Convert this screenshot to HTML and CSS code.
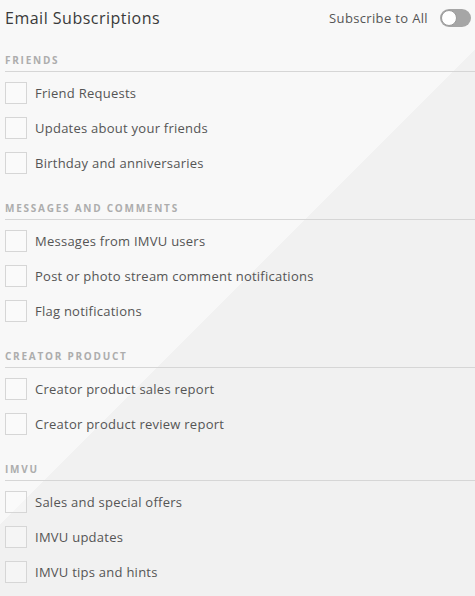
FILE: index.html
```html
<!DOCTYPE html>
<html lang="en">
<head>
<meta charset="utf-8">
<title>Email Subscriptions</title>
<link rel="stylesheet" href="styles.css">
</head>
<body>
<div class="page">
  <header class="topbar">
    <h1 class="title">Email Subscriptions</h1>
    <label class="sub-all">
      <span class="sub-all-text">Subscribe to All</span>
      <span class="toggle"><span class="knob"></span></span>
    </label>
  </header>

  <section class="group">
    <h2 class="group-title">Friends</h2>
    <ul class="options">
      <li class="option"><span class="box"></span><span class="label">Friend Requests</span></li>
      <li class="option"><span class="box"></span><span class="label">Updates about your friends</span></li>
      <li class="option"><span class="box"></span><span class="label">Birthday and anniversaries</span></li>
    </ul>
  </section>

  <section class="group">
    <h2 class="group-title">Messages and Comments</h2>
    <ul class="options">
      <li class="option"><span class="box"></span><span class="label">Messages from IMVU users</span></li>
      <li class="option"><span class="box"></span><span class="label">Post or photo stream comment notifications</span></li>
      <li class="option"><span class="box"></span><span class="label">Flag notifications</span></li>
    </ul>
  </section>

  <section class="group">
    <h2 class="group-title">Creator Product</h2>
    <ul class="options">
      <li class="option"><span class="box"></span><span class="label">Creator product sales report</span></li>
      <li class="option"><span class="box"></span><span class="label">Creator product review report</span></li>
    </ul>
  </section>

  <section class="group">
    <h2 class="group-title">IMVU</h2>
    <ul class="options">
      <li class="option"><span class="box"></span><span class="label">Sales and special offers</span></li>
      <li class="option"><span class="box"></span><span class="label">IMVU updates</span></li>
      <li class="option"><span class="box"></span><span class="label">IMVU tips and hints</span></li>
    </ul>
  </section>
</div>
</body>
</html>
```

FILE: styles.css
```css
html, body {
  margin: 0;
  padding: 0;
}
body {
  width: 475px;
  height: 596px;
  overflow: hidden;
  background: linear-gradient(135deg, #f8f8f8 49%, #f1f1f1 49%);
  font-family: "Open Sans", "Liberation Sans", sans-serif;
  color: #555;
}
.page {
  padding: 0 0 0 5px;
}
.topbar {
  display: flex;
  align-items: center;
  justify-content: space-between;
  height: 36px;
}
.title {
  margin: 0;
  font-size: 16px;
  font-weight: 400;
  letter-spacing: 0.5px;
  color: #3a3a3a;
  line-height: 20px;
}
.sub-all {
  display: flex;
  align-items: center;
  gap: 12px;
  padding-right: 4px;
}
.sub-all-text {
  font-size: 13px;
  letter-spacing: 0.35px;
  color: #555;
}
.toggle {
  display: flex;
  align-items: center;
  width: 31px;
  height: 18px;
  border-radius: 9px;
  background: #a6a6a6;
  box-sizing: border-box;
  padding-left: 1px;
}
.knob {
  width: 16px;
  height: 16px;
  border-radius: 50%;
  background: #fff;
  box-sizing: border-box;
  border: 1px solid #9a9a9a;
}
.group {
  margin-top: 17px;
}
.group + .group {
  margin-top: 27px;
}
.group-title {
  margin: 0;
  font-size: 10px;
  font-weight: 700;
  letter-spacing: 1.75px;
  text-transform: uppercase;
  color: #adadad;
  line-height: 14px;
  padding-bottom: 4px;
  border-bottom: 1px solid #d6d6d6;
}
.options {
  list-style: none;
  margin: 10px 0 0;
  padding: 0;
  display: flex;
  flex-direction: column;
  gap: 13px;
}
.option {
  display: flex;
  align-items: center;
  gap: 8px;
  height: 22px;
}
.box {
  width: 22px;
  height: 22px;
  box-sizing: border-box;
  border: 1px solid #d6d6d6;
  background: rgba(255, 255, 255, 0.3);
  flex: none;
}
.label {
  font-size: 13px;
  letter-spacing: 0.25px;
  color: #555;
}
```
